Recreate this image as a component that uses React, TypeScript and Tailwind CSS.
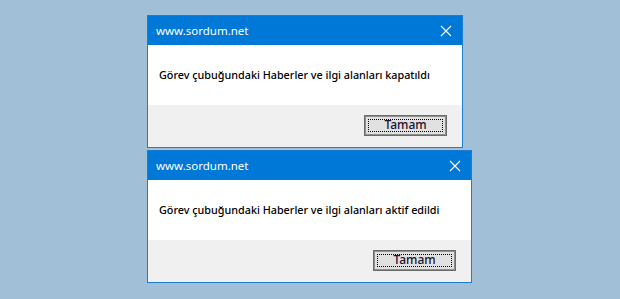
import React from "react";

function Dialog({ width, message }: { width: string; message: string }) {
  return (
    <div className={`${width} border border-[#1a7fd4] bg-white flex flex-col`}>
      <div className="h-[29px] bg-[#0078d7] flex items-center justify-between pl-2 pr-[10px]">
        <span className="text-white text-[11.5px] font-['Noto_Sans',sans-serif] leading-none">
          www.sordum.net
        </span>
        <svg width="12" height="12" viewBox="0 0 12 12" className="text-white">
          <path d="M1 1 L11 11 M11 1 L1 11" stroke="currentColor" strokeWidth="1.1" />
        </svg>
      </div>
      <div className="h-[60px] flex items-center pl-[11px]">
        <span className="text-[10.8px] text-black font-medium font-['Noto_Sans',sans-serif]">
          {message}
        </span>
      </div>
      <div className="h-[42px] bg-[#f0f0f0] flex items-center justify-end pr-[15px] pb-[2px]">
        <button className="w-[83px] h-[21px] border border-[#6b6b6b] bg-[#e1e1e1] shadow-[inset_0_0_0_1px_#8f8f8f] p-[3px] flex">
          <span className="flex-1 border border-dotted border-black flex items-center justify-center text-[12px] text-[#1a1030] font-medium font-['Noto_Sans',sans-serif] leading-none">
            Tamam
          </span>
        </button>
      </div>
    </div>
  );
}

export default function App() {
  return (
    <div className="w-[620px] h-[299px] bg-[#a2bfd8] pt-[15px] pl-[147px] flex flex-col items-start gap-[2px]">
      <Dialog width="w-[316px]" message="Görev çubuğundaki Haberler ve ilgi alanları kapatıldı" />
      <Dialog width="w-[325px]" message="Görev çubuğundaki Haberler ve ilgi alanları aktif edildi" />
    </div>
  );
}
